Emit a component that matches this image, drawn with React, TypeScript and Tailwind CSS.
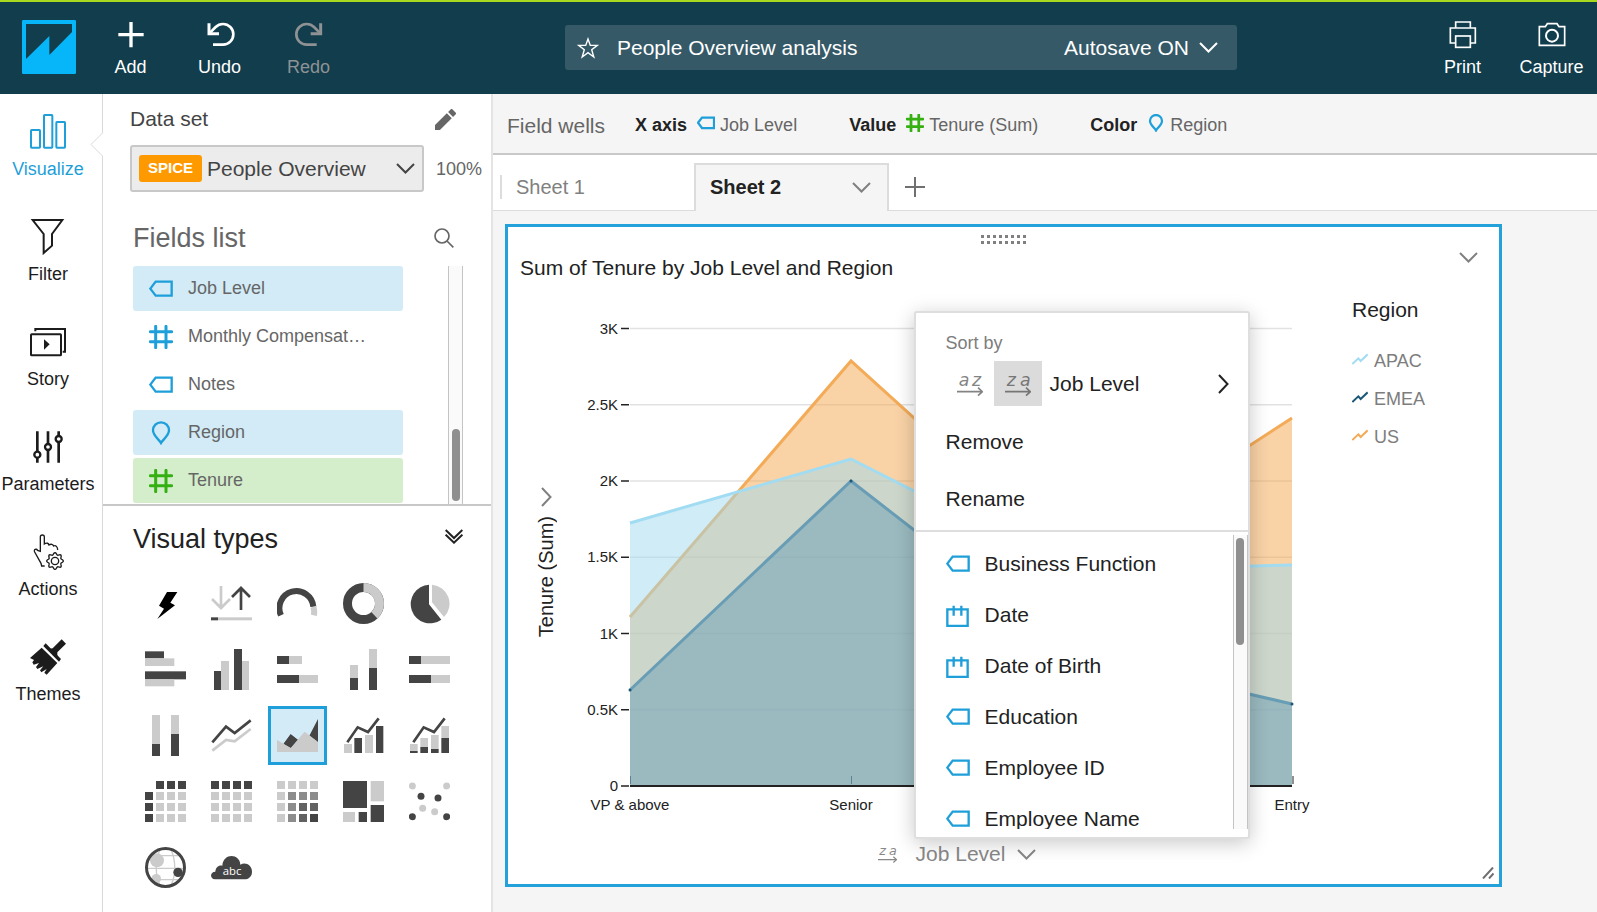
import { ReactNode, useState } from "react";

const DARK = "#444444";
const LIGHT = "#cbcbcb";

type FieldKind = "tag" | "hash" | "pin" | "date";

const fields: { name: string; kind: FieldKind; tone: string }[] = [
  { name: "Job Level", kind: "tag", tone: "bg-[#d2ebf7] text-[#1f9fd9]" },
  { name: "Monthly Compensat…", kind: "hash", tone: "text-[#1f9fd9]" },
  { name: "Notes", kind: "tag", tone: "text-[#1f9fd9]" },
  { name: "Region", kind: "pin", tone: "bg-[#d2ebf7] text-[#1f9fd9]" },
  { name: "Tenure", kind: "hash", tone: "bg-[#d4eecb] text-[#35b012]" },
];

const menuFields: { name: string; kind: FieldKind }[] = [
  { name: "Business Function", kind: "tag" },
  { name: "Date", kind: "date" },
  { name: "Date of Birth", kind: "date" },
  { name: "Education", kind: "tag" },
  { name: "Employee ID", kind: "tag" },
  { name: "Employee Name", kind: "tag" },
];

function FieldIcon({ kind, small }: { kind: FieldKind; small?: boolean }) {
  const size = small ? "w-[18px] h-[18px]" : "w-6 h-6";
  return (
    <svg
      viewBox="0 0 72 72"
      className={`${size} shrink-0`}
      fill="none"
      stroke="currentColor"
      strokeWidth={small ? 9 : 7}
      aria-hidden="true"
    >
      {kind === "tag" && <path d="M4 35 L20 14 H68 V56 H20 Z" />}
      {kind === "hash" && (
        <path
          d="M20 4 V68 M51 4 V68 M4 20 H68 M4 50 H68"
          strokeWidth={small ? 11 : 9}
          strokeLinecap="round"
        />
      )}
      {kind === "pin" && (
        <path d="M36 66 C30 55 12 44 12 28 A24 24 0 0 1 60 28 C60 44 42 55 36 66 Z" />
      )}
      {kind === "date" && <path d="M4 19 H65 V69 H4 Z M23 8 V38 M46 8 V38" />}
    </svg>
  );
}

function Chevron({ className }: { className?: string }) {
  return (
    <svg
      viewBox="0 0 19 11"
      className={`w-[19px] h-[11px] shrink-0 ${className ?? ""}`}
      fill="none"
      stroke="currentColor"
      strokeWidth="2"
      aria-hidden="true"
    >
      <path d="M1 1 L9.5 9.5 L18 1" />
    </svg>
  );
}

function ChevronRight({ className }: { className?: string }) {
  return (
    <svg
      viewBox="0 0 11 20"
      className={`w-[11px] h-5 shrink-0 ${className ?? ""}`}
      fill="none"
      stroke="currentColor"
      strokeWidth="2"
      aria-hidden="true"
    >
      <path d="M1 1 L9.5 10 L1 19" />
    </svg>
  );
}

function SortIcon({ first, second, className }: { first: string; second: string; className: string }) {
  return (
    <svg viewBox="0 -18 78 108" className={className} aria-hidden="true">
      <g fill="currentColor" fontFamily="'DejaVu Sans', Verdana, sans-serif" fontStyle="italic" fontSize="52">
        <text x="5" y="41">{first}</text>
        <text x="45" y="41">{second}</text>
      </g>
      <path d="M0 59 H75 M63 47 L76 59 L63 71" fill="none" stroke="currentColor" strokeWidth="5" />
    </svg>
  );
}

function HeaderButton({ label, muted, children }: { label: string; muted?: boolean; children: ReactNode }) {
  return (
    <button
      type="button"
      className={`flex w-[89px] shrink-0 flex-col items-center pt-[18px] ${muted ? "text-[#8f9294]" : "text-white"}`}
    >
      <svg viewBox="0 0 90 90" className="w-[30px] h-[30px]" fill="none" stroke="currentColor" aria-hidden="true">
        {children}
      </svg>
      <span className="mt-[5px] text-[18px] leading-6">{label}</span>
    </button>
  );
}

function Header() {
  return (
    <header className="flex h-[94px] shrink-0 items-start border-t-2 border-[#a8d91f] bg-[#113d4c]">
      <a href="#home" aria-label="Home" className="mt-[18px] ml-[22px] mr-[10px] shrink-0">
        <svg viewBox="0 0 162 162" className="w-[54px] h-[54px]">
          <rect width="162" height="162" rx="4" fill="#06b6f8" />
          <path d="M12 12 H150 V36 L82 105 V48 L12 117 Z" fill="#113d4c" />
        </svg>
      </a>
      <HeaderButton label="Add">
        <path d="M45 6 V82 M7 44 H83" strokeWidth="10" />
      </HeaderButton>
      <HeaderButton label="Undo">
        <path d="M12 10 V41 H42" strokeWidth="9" />
        <path d="M13 40 L32 21 C38 15 45 12 54 12 A31 31 0 0 1 54 74 H24" strokeWidth="8" />
      </HeaderButton>
      <HeaderButton label="Redo" muted>
        <path d="M80 10 V41 H50" strokeWidth="9" />
        <path d="M79 40 L60 21 C54 15 47 12 38 12 A31 31 0 0 0 38 74 H68" strokeWidth="8" />
      </HeaderButton>

      <div className="mt-[23px] ml-[212px] mr-[181px] flex h-[45px] min-w-0 flex-1 items-center rounded-[3px] bg-[#355967] pl-3 pr-[19px] text-[21px] text-white">
        <button type="button" aria-label="Favorite">
          <svg viewBox="0 0 22 22" className="w-[22px] h-[22px]" fill="none" stroke="currentColor" strokeWidth="1.4">
            <path d="M11 2 L13.3 8.4 H20.3 L14.7 12.7 L16.8 20 L11 15.6 L5.2 20 L7.3 12.7 L1.7 8.4 H8.7 Z" />
          </svg>
        </button>
        <h1 className="ml-[18px] flex-1 truncate">People Overview analysis</h1>
        <button type="button" className="flex shrink-0 items-center gap-[10px]">
          Autosave ON
          <Chevron />
        </button>
      </div>

      <div className="flex pr-px">
        <HeaderButton label="Print">
          <g strokeWidth="5">
            <path d="M23 23 V6 H67 V23" />
            <path d="M21 69 H7 V24 H82 V69 H68" />
            <rect x="23" y="48" width="44" height="34" />
          </g>
        </HeaderButton>
        <HeaderButton label="Capture">
          <g strokeWidth="5">
            <path d="M7 76 V20 H25 L31 11 H60 L66 20 H83 V76 Z" />
            <circle cx="45" cy="47" r="18" strokeWidth="6" />
          </g>
        </HeaderButton>
      </div>
    </header>
  );
}

function gearPath(cx: number, cy: number) {
  const pts: string[] = [];
  for (let i = 0; i < 72; i++) {
    const a = (i / 72) * Math.PI * 2;
    const r = 22 + 3 * Math.cos(8 * a);
    pts.push(`${(cx + r * Math.cos(a)).toFixed(1)} ${(cy + r * Math.sin(a)).toFixed(1)}`);
  }
  return `M${pts.join("L")}Z`;
}

const navItems: { label: string; icon: ReactNode }[] = [
  {
    label: "Visualize",
    icon: (
      <g strokeWidth="6">
        <rect x="3" y="48" width="27" height="53" rx="2" />
        <rect x="42" y="3" width="25" height="98" rx="2" />
        <rect x="79" y="24" width="26" height="77" rx="2" />
      </g>
    ),
  },
  {
    label: "Filter",
    icon: <path d="M8 3 H97 L66 45 V80 L41 102 V45 Z" strokeWidth="6" />,
  },
  {
    label: "Story",
    icon: (
      <g strokeWidth="6">
        <rect x="3" y="31" width="90" height="63" rx="2" />
        <path d="M16 22 V15 H105 V83 H98" />
        <path d="M42 46 L59 61 L42 77 Z" fill="currentColor" stroke="none" />
      </g>
    ),
  },
  {
    label: "Parameters",
    icon: (
      <g strokeWidth="8">
        <path d="M22 7 V101 M54 7 V101 M86 7 V101" />
        <circle cx="22" cy="77" r="9" fill="white" strokeWidth="7" />
        <circle cx="54" cy="54" r="9" fill="white" strokeWidth="7" />
        <circle cx="86" cy="30" r="9" fill="white" strokeWidth="7" />
      </g>
    ),
  },
  {
    label: "Actions",
    icon: (
      <g strokeWidth="4">
        <path d="M44 96 H35 L33 88 L14 54 C10 46 19 43 23 49 L31 52 V9 C31 1 43 1 43 9 V30 C50 25 56 28 57 33 C63 29 69 31 71 36 C77 33 83 38 83 48" />
        <path d={gearPath(75, 81)} />
        <circle cx="75" cy="81" r="11" />
      </g>
    ),
  },
  {
    label: "Themes",
    icon: (
      <g fill="currentColor" stroke="none">
        <path d="M60 29 L68 28 L95 1 L108 14 L82 40 L82 52 Z" />
        <path d="M47 13 L93 60 L87 68 L40 21 Z" />
        <path d="M0 57 L35 26 L82 72 L50 107 L43 101 L50 90 L34 100 L30 94 L40 82 L22 90 L18 84 L27 72 L11 77 L7 70 L12 63 Z" />
      </g>
    ),
  },
];

function Rail() {
  return (
    <nav className="relative w-[103px] shrink-0 border-r border-[#d9d9d9] bg-white pt-5 pr-[6px]">
      {navItems.map((item, i) => (
        <button
          key={item.label}
          type="button"
          className={`flex h-[105px] w-full flex-col items-center ${i === 0 ? "text-[#1f9fd9]" : "text-[#1c1c1c]"}`}
        >
          <svg viewBox="0 0 108 108" className="w-9 h-9 shrink-0" fill="none" stroke="currentColor" aria-hidden="true">
            {item.icon}
          </svg>
          <span className="mt-[7px] text-[18px] leading-6">{item.label}</span>
        </button>
      ))}
      <svg viewBox="0 0 13 25" className="absolute top-[38px] -right-px w-[13px] h-[25px]" aria-hidden="true">
        <path d="M13 0.5 L1 12.5 L13 24.5" fill="white" stroke="#d9d9d9" />
      </svg>
    </nav>
  );
}

/* x, y, width, height, shade */
type Bar = [number, number, number, number, string];

function Bars({ bars }: { bars: Bar[] }) {
  return (
    <>
      {bars.map(([x, y, w, h, c], i) => (
        <rect key={i} x={x} y={y} width={w} height={h} fill={c} />
      ))}
    </>
  );
}

function Cells({ rows }: { rows: string[] }) {
  const shades: Record<string, string> = { l: LIGHT, m: "#8c8c8c", s: "#626262", d: DARK };
  return (
    <>
      {rows.map((row, y) =>
        row.split("").map((c, x) =>
          c === " " ? null : (
            <rect key={`${x}-${y}`} x={x * 33} y={y * 33} width="24" height="24" fill={shades[c]} />
          )
        )
      )}
    </>
  );
}

const visualTypes: { name: string; icon: ReactNode }[] = [
  {
    name: "AutoGraph",
    icon: <path d="M66 27 H97 L76 59 L90 67 L37 108 L57 77 L42 68 Z" fill="black" />,
  },
  {
    name: "KPI",
    icon: (
      <>
        <path d="M30 9 V75 M3 48 L30 75 L57 48" fill="none" stroke={LIGHT} strokeWidth="8" />
        <path d="M90 81 V16 M63 42 L90 15 L117 42" fill="none" stroke={DARK} strokeWidth="8" />
        <Bars bars={[[0, 103, 21, 9, DARK], [21, 103, 102, 9, LIGHT]]} />
      </>
    ),
  },
  {
    name: "Gauge chart",
    icon: (
      <g fill="none" strokeWidth="18">
        <path d="M12 97 A51 51 0 1 1 109 71" stroke={DARK} />
        <path d="M109 71 A51 51 0 0 1 111 97" stroke={LIGHT} />
      </g>
    ),
  },
  {
    name: "Donut chart",
    icon: (
      <g fill="none" strokeWidth="27">
        <circle cx="61.5" cy="61.5" r="48" stroke={DARK} />
        <path d="M61.5 13.5 A48 48 0 0 1 94 96.6" stroke={LIGHT} />
      </g>
    ),
  },
  {
    name: "Pie chart",
    icon: (
      <>
        <path d="M60 5 A58 58 0 1 0 97 110 L60 64 Z" fill={DARK} />
        <path d="M69 5 A57 57 0 0 1 105 102 L69 58 Z" fill={LIGHT} />
      </>
    ),
  },
  {
    name: "Horizontal bar chart",
    icon: <Bars bars={[[0, 7, 57, 21, DARK], [0, 28, 88, 23, LIGHT], [0, 67, 123, 24, DARK], [0, 91, 88, 21, LIGHT]]} />,
  },
  {
    name: "Vertical bar chart",
    icon: <Bars bars={[[9, 66, 21, 57, DARK], [30, 36, 24, 87, LIGHT], [69, 0, 24, 123, DARK], [93, 36, 21, 87, LIGHT]]} />,
  },
  {
    name: "Horizontal stacked bar chart",
    icon: <Bars bars={[[0, 21, 36, 24, DARK], [36, 21, 39, 24, LIGHT], [0, 78, 66, 24, DARK], [66, 78, 57, 24, LIGHT]]} />,
  },
  {
    name: "Vertical stacked bar chart",
    icon: <Bars bars={[[21, 48, 24, 39, LIGHT], [21, 87, 24, 36, DARK], [78, 0, 24, 57, LIGHT], [78, 57, 24, 66, DARK]]} />,
  },
  {
    name: "Horizontal stacked 100% bar chart",
    icon: <Bars bars={[[0, 21, 36, 24, DARK], [36, 21, 87, 24, LIGHT], [0, 78, 66, 24, DARK], [66, 78, 57, 24, LIGHT]]} />,
  },
  {
    name: "Vertical stacked 100% bar chart",
    icon: <Bars bars={[[21, 0, 24, 87, LIGHT], [21, 87, 24, 36, DARK], [78, 0, 24, 57, LIGHT], [78, 57, 24, 66, DARK]]} />,
  },
  {
    name: "Line chart",
    icon: (
      <g fill="none" strokeWidth="8">
        <path d="M4 107 L45 75 L71 79 L119 42" stroke={LIGHT} />
        <path d="M4 82 L45 35 L71 54 L119 16" stroke={DARK} />
      </g>
    ),
  },
  {
    name: "Area line chart",
    icon: (
      <>
        <path d="M20 86 L41 58 L62 74 L42 99 Z M97 62 L123 12 V82 Z" fill={DARK} />
        <path d="M0 75 L20 86 L41 98 L83 50 L123 81 V111 H0 Z" fill={LIGHT} />
        <path d="M20 86 L41 58 L62 74 L41 98 Z" fill={DARK} />
      </>
    ),
  },
  {
    name: "Clustered bar combo chart",
    icon: (
      <>
        <Bars bars={[[3, 87, 24, 27, LIGHT], [34, 69, 23, 45, DARK], [66, 60, 24, 54, LIGHT], [99, 33, 22, 81, DARK]]} />
        <path d="M13 82 L44 37 L75 51 L107 10" fill="none" stroke={DARK} strokeWidth="8" />
      </>
    ),
  },
  {
    name: "Stacked bar combo chart",
    icon: (
      <>
        <Bars
          bars={[
            [3, 87, 23, 21, LIGHT], [3, 108, 23, 6, DARK],
            [34, 69, 23, 27, LIGHT], [34, 96, 23, 18, DARK],
            [66, 60, 23, 42, LIGHT], [66, 102, 23, 12, DARK],
            [97, 33, 23, 36, LIGHT], [97, 69, 23, 45, DARK],
          ]}
        />
        <path d="M13 82 L44 37 L75 51 L107 10" fill="none" stroke={DARK} strokeWidth="8" />
      </>
    ),
  },
  { name: "Pivot table", icon: <Cells rows={[" ddd", "dlll", "dlll", "dlll"]} /> },
  { name: "Table", icon: <Cells rows={["dddd", "llll", "llll", "llll"]} /> },
  { name: "Heat map", icon: <Cells rows={["llll", "lmmm", "lmss", "lmsd"]} /> },
  {
    name: "Tree map",
    icon: (
      <Bars
        bars={[
          [0, 0, 72, 81, DARK], [83, 0, 40, 61, LIGHT], [83, 72, 40, 51, DARK],
          [0, 93, 36, 30, LIGHT], [47, 93, 25, 30, DARK],
        ]}
      />
    ),
  },
  {
    name: "Scatter plot",
    icon: (
      <>
        {[[10, 15], [113, 15], [41, 82], [77, 92]].map(([x, y]) => (
          <circle key={`${x}${y}`} cx={x} cy={y} r="10.5" fill={LIGHT} />
        ))}
        {[[36, 46], [87, 51], [10, 107], [113, 107]].map(([x, y]) => (
          <circle key={`${x}${y}`} cx={x} cy={y} r="10.5" fill={DARK} />
        ))}
      </>
    ),
  },
  {
    name: "Points on map",
    icon: (
      <>
        <g fill="none" stroke={LIGHT} strokeWidth="4">
          <path d="M5 64 H118 M24 26 H100 M24 98 H100" />
          <path d="M78 8 C93 40 93 84 78 115 M45 8 C30 40 30 84 45 115" />
        </g>
        <circle cx="36" cy="40" r="21" fill={LIGHT} />
        <circle cx="34" cy="95" r="14" fill={LIGHT} />
        <circle cx="99" cy="76" r="14" fill={DARK} />
        <circle cx="61.5" cy="61.5" r="57" fill="none" stroke={DARK} strokeWidth="9" />
      </>
    ),
  },
  {
    name: "Word cloud",
    icon: (
      <>
        <path
          d="M12 97 C-4 96 -4 74 13 74 C14 62 22 54 34 56 C36 18 86 18 88 53 C104 44 123 55 123 74 C123 88 113 97 100 97 Z"
          fill={DARK}
        />
        <text x="63" y="84" textAnchor="middle" fontSize="34" fill="white" fontFamily="'Open Sans', sans-serif">
          abc
        </text>
      </>
    ),
  },
];

function SidePanel() {
  const [selected, setSelected] = useState("Area line chart");

  return (
    <aside className="w-[390px] shrink-0 border-r-2 border-[#e4e4e4] bg-white">
      <div className="pt-[11px] pl-[27px]">
        <div className="flex items-center justify-between pr-[35px]">
          <label htmlFor="dataset" className="text-[21px] leading-7 text-[#444]">
            Data set
          </label>
          <button type="button" aria-label="Edit data set">
            <svg viewBox="0 0 64 64" className="w-[21px] h-[21px]" fill="#666">
              <path d="M0 64 V49 L36 13 L51 28 L15 64 Z M40 9 L49 0 L52 0 L64 12 V15 L55 24 Z" />
            </svg>
          </button>
        </div>
        <div className="mt-3 flex items-center gap-3">
          <div className="relative flex h-[47px] w-[294px] items-center rounded-[3px] border-2 border-[#c8c8c8] bg-[#ececec] pl-[7px] pr-[7px]">
            <span className="h-[27px] w-[63px] shrink-0 rounded-[3px] bg-[#ff9900] text-center text-[15px] leading-[26px] font-bold text-white">
              SPICE
            </span>
            <select id="dataset" className="ml-[5px] min-w-0 flex-1 appearance-none bg-transparent text-[21px] text-[#444]">
              <option>People Overview</option>
            </select>
            <Chevron className="pointer-events-none text-[#444]" />
          </div>
          <span className="pt-px text-[18px] text-[#666]">100%</span>
        </div>
      </div>

      <div className="mt-7 flex items-center justify-between pl-[30px] pr-[37px]">
        <h2 className="text-[27px] leading-9 text-[#666]">Fields list</h2>
        <button type="button" aria-label="Search fields">
          <svg viewBox="0 0 60 60" className="w-5 h-5" fill="none" stroke="#666" strokeWidth="5">
            <circle cx="24" cy="24" r="21" />
            <path d="M39 39 L58 58" />
          </svg>
        </button>
      </div>
      <div className="mt-[10px] flex justify-between border-b-2 border-[#c8c8c8] pb-px pl-[30px] pr-7">
        <ul className="flex w-[270px] flex-col gap-[3px]">
          {fields.map((f) => (
            <li key={f.name}>
              <button type="button" className={`flex h-[45px] w-full items-center gap-[15px] rounded-[3px] pl-4 ${f.tone}`}>
                <FieldIcon kind={f.kind} />
                <span className="text-[18px] text-[#666]">{f.name}</span>
              </button>
            </li>
          ))}
        </ul>
        <div className="-mb-px flex w-[15px] items-end justify-center border-x border-[#c4c4c4] bg-[#fafafa] pb-[3px]">
          <div className="h-[72px] w-2 rounded-full bg-[#8e8f8e]"></div>
        </div>
      </div>

      <div className="mt-[15px] flex items-center justify-between pl-[30px] pr-7">
        <h2 className="text-[27px] leading-9 text-[#222]">Visual types</h2>
        <button type="button" aria-label="Collapse visual types" className="pb-[6px]">
          <svg viewBox="0 0 54 45" className="block w-[18px] h-[15px]" fill="none" stroke="#222" strokeWidth="6">
            <path d="M2 3 L27 27 L52 3 M2 17 L27 41 L52 17" />
          </svg>
        </button>
      </div>
      <div className="mt-[17px] grid w-fit grid-cols-5 gap-[7px] pl-[33px]">
        {visualTypes.map((v) => (
          <button
            key={v.name}
            type="button"
            aria-label={v.name}
            aria-pressed={v.name === selected}
            onClick={() => setSelected(v.name)}
            className={`flex h-[59px] w-[59px] items-center justify-center border-[3px] ${
              v.name === selected ? "border-[#1f9fd9] bg-[#d2ebf7]" : "border-transparent"
            }`}
          >
            <svg viewBox="0 0 123 123" className="w-[41px] h-[41px] shrink-0">
              {v.icon}
            </svg>
          </button>
        ))}
      </div>
    </aside>
  );
}

function Well({ label, kind, tone, value }: { label: string; kind: FieldKind; tone: string; value: string }) {
  return (
    <div className="flex items-center text-[18px]">
      <span className="mr-[10px] font-bold text-[#222]">{label}</span>
      <span className={`mr-[5px] mb-[6px] ${tone}`}>
        <FieldIcon kind={kind} small />
      </span>
      <span className="text-[#666]">{value}</span>
    </div>
  );
}

const yTicks = ["3K", "2.5K", "2K", "1.5K", "1K", "0.5K", "0"];
const xs = [46, 267, 488, 708];
const series = {
  us: [335, 79, 279, 136],
  apac: [241, 177, 289, 283],
  emea: [408, 199, 371, 422],
};

const linePath = (ys: number[]) => ys.map((y, i) => `${i ? "L" : "M"}${xs[i]} ${y}`).join(" ");
const areaPath = (ys: number[]) => `${linePath(ys)} V504 H46 Z`;

function AreaChart() {
  return (
    <svg
      viewBox="0 0 736 540"
      className="block h-auto min-w-0 flex-1"
      role="img"
      aria-label="Sum of Tenure by Job Level and Region"
      fontFamily="'Liberation Sans', Arial, sans-serif"
      fontSize="15"
    >
      {yTicks.map((t, i) => {
        const y = 46.5 + i * 76.25;
        return (
          <g key={t}>
            <text x="34" y={y + 5} textAnchor="end" fill="#222">
              {t}
            </text>
            <path d={`M37 ${y} H45`} stroke="#222" strokeWidth="1.5" />
            {t !== "0" && <path d={`M46 ${y} H708`} stroke="#e2e2e2" strokeWidth="1.5" />}
          </g>
        );
      })}
      <path d={areaPath(series.us)} fill="#f3a54d" fillOpacity="0.5" />
      <path d={linePath(series.us)} fill="none" stroke="#f3ab57" strokeWidth="3" />
      <path d={areaPath(series.apac)} fill="#a0daef" fillOpacity="0.5" />
      <path d={linePath(series.apac)} fill="none" stroke="#a2dcf2" strokeWidth="3" />
      <path d={areaPath(series.emea)} fill="#2979aa" fillOpacity="0.3" />
      <path d={linePath(series.emea)} fill="none" stroke="#689db5" strokeWidth="3" />
      {xs.map((x, i) => (
        <circle key={x} cx={x} cy={series.emea[i]} r="1.5" fill="#1d5878" />
      ))}
      <path d="M46.5 494 V502 M267.5 494 V502" stroke="#5d8491" />
      <path d="M709 494 V502" stroke="#222" />
      <path d="M46 504 H708" stroke="#222" strokeWidth="2" />
      <g fill="#222" textAnchor="middle">
        <text x="46" y="528">VP &amp; above</text>
        <text x="267" y="528">Senior</text>
        <text x="708" y="528">Entry</text>
      </g>
    </svg>
  );
}

const legend = [
  { name: "APAC", color: "text-[#a2dcf2]" },
  { name: "EMEA", color: "text-[#1d5878]" },
  { name: "US", color: "text-[#f3ab57]" },
];

function SortMenu() {
  return (
    <div className="absolute bottom-full left-0 mb-px w-[336px] rounded-[3px] border-2 border-[#dedede] bg-white pb-2 text-[21px] text-[#222] shadow-[0_4px_20px_rgba(0,0,0,0.22)]">
      <p className="pt-[18px] pl-[30px] text-[18px] leading-6 text-[#7d7d7d]">Sort by</p>
      <div className="mt-[6px] flex h-[45px] items-center pl-[30px] pr-[19px]">
        <button type="button" aria-label="Sort ascending" className="flex h-full w-12 items-center justify-center text-[#848484]">
          <SortIcon first="a" second="z" className="w-[26px] h-9" />
        </button>
        <button
          type="button"
          aria-label="Sort descending"
          className="flex h-full w-12 items-center justify-center bg-[#dbdbdb] text-[#767676]"
        >
          <SortIcon first="z" second="a" className="w-[26px] h-9" />
        </button>
        <button type="button" className="ml-2 flex flex-1 items-center justify-between">
          Job Level
          <ChevronRight />
        </button>
      </div>
      <button type="button" className="mt-[7px] block h-[57px] w-full pl-[30px] text-left">
        Remove
      </button>
      <button type="button" className="block h-[57px] w-full pl-[30px] text-left">
        Rename
      </button>
      <div className="mt-[3px] flex h-[299px] overflow-hidden border-t-2 border-[#dedede]">
        <ul className="flex-1 pt-[6px]">
          {menuFields.map((f) => (
            <li key={f.name}>
              <button type="button" className="flex h-[51px] w-full items-center gap-[15px] pl-[30px] text-left">
                <span className="text-[#1f9fd9]">
                  <FieldIcon kind={f.kind} />
                </span>
                {f.name}
              </button>
            </li>
          ))}
        </ul>
        <div className="mt-[3px] flex w-[15px] justify-center border-x border-[#c4c4c4] bg-[#fafafa] pt-[3px]">
          <div className="h-[107px] w-2 rounded-full bg-[#8e8f8e]"></div>
        </div>
      </div>
    </div>
  );
}

function VisualCard() {
  return (
    <section className="relative mt-[13px] ml-3 mr-[95px] border-[3px] border-[#22a1db] bg-white pt-2 pb-4">
      <svg viewBox="0 0 46 9" className="mx-auto block w-[46px] h-[9px]" fill="#808080" aria-hidden="true">
        {Array.from({ length: 16 }, (_, i) => (
          <rect key={i} x={(i % 8) * 6} y={i < 8 ? 0 : 6} width="3" height="3" />
        ))}
      </svg>
      <div className="mt-2 flex items-start justify-between pl-3 pr-[21px]">
        <h2 className="pt-[2px] text-[21px] leading-7 text-[#222]">Sum of Tenure by Job Level and Region</h2>
        <button type="button" aria-label="Visual menu" className="text-[#808080]">
          <Chevron />
        </button>
      </div>

      <div className="flex">
        <div className="flex w-[76px] shrink-0 flex-col items-center justify-center pt-5">
          <ChevronRight className="text-[#808080]" />
          <span className="mt-[9px] rotate-180 text-[20px] leading-6 text-[#222] [writing-mode:vertical-rl]">
            Tenure (Sum)
          </span>
        </div>
        <AreaChart />
        <div className="w-[179px] shrink-0 pt-[14px] pl-8">
          <h3 className="text-[21px] leading-7 text-[#222]">Region</h3>
          <ul className="mt-[18px] text-[18px] text-[#7d7d7d]">
            {legend.map((l) => (
              <li key={l.name} className="flex h-[38px] items-center gap-[6px]">
                <svg viewBox="0 0 48 36" className={`mb-1 w-4 h-3 ${l.color}`} fill="none" stroke="currentColor" strokeWidth="6">
                  <path d="M1 33 L19 16 L26 24 L47 4" />
                </svg>
                {l.name}
              </li>
            ))}
          </ul>
        </div>
      </div>

      <div className="mt-[18px] flex items-center justify-center pr-[93px] text-[#888]">
        <SortIcon first="z" second="a" className="mr-[17px] w-[19px] h-7" />
        <div className="relative">
          <button type="button" className="flex items-center gap-3 pl-[2px] text-[21px] leading-7">
            Job Level
            <Chevron />
          </button>
          <SortMenu />
        </div>
      </div>
      <svg
        viewBox="0 0 12 12"
        className="absolute right-[5px] bottom-[5px] w-3 h-3"
        stroke="#707070"
        strokeWidth="2"
        aria-hidden="true"
      >
        <path d="M1 11.5 L11 0.5 M7 11.5 L11.5 6.5" />
      </svg>
    </section>
  );
}

function Workspace() {
  return (
    <main className="min-w-0 flex-1 bg-[#f5f5f5]">
      <div className="flex h-[61px] items-center border-b-2 border-[#c8c8c8] pt-[4px] pl-[14px]">
        <h2 className="mr-[30px] text-[21px] text-[#666]">Field wells</h2>
        <div className="flex gap-[52px]">
          <Well label="X axis" kind="tag" tone="text-[#1f9fd9]" value="Job Level" />
          <Well label="Value" kind="hash" tone="text-[#35b012]" value="Tenure (Sum)" />
          <Well label="Color" kind="pin" tone="text-[#1f9fd9]" value="Region" />
        </div>
      </div>
      <div className="flex h-14 items-end border-b border-[#dcdcdc] bg-white pl-[7px] text-[20px]">
        <span className="mb-[11px] h-6 w-[2px] bg-[#dcdcdc]"></span>
        <button type="button" className="h-[46px] w-48 pl-[14px] text-left text-[#808080]">
          Sheet 1
        </button>
        <button
          type="button"
          className="-mb-px flex h-12 w-[195px] items-center justify-between border-2 border-b-0 border-[#dcdcdc] bg-[#f5f5f5] pl-[14px] pr-4 pb-[2px] font-bold text-[#222]"
        >
          Sheet 2
          <Chevron className="text-[#808080]" />
        </button>
        <button type="button" aria-label="Add sheet" className="flex h-[46px] items-center pl-4">
          <svg viewBox="0 0 20 20" className="w-5 h-5" stroke="#707070" strokeWidth="2">
            <path d="M10 0 V20 M0 10 H20" />
          </svg>
        </button>
      </div>
      <VisualCard />
    </main>
  );
}

export default function App() {
  return (
    <div className="flex min-h-screen flex-col bg-white font-['Liberation_Sans',Arial,sans-serif]">
      <Header />
      <div className="flex flex-1">
        <Rail />
        <SidePanel />
        <Workspace />
      </div>
    </div>
  );
}
